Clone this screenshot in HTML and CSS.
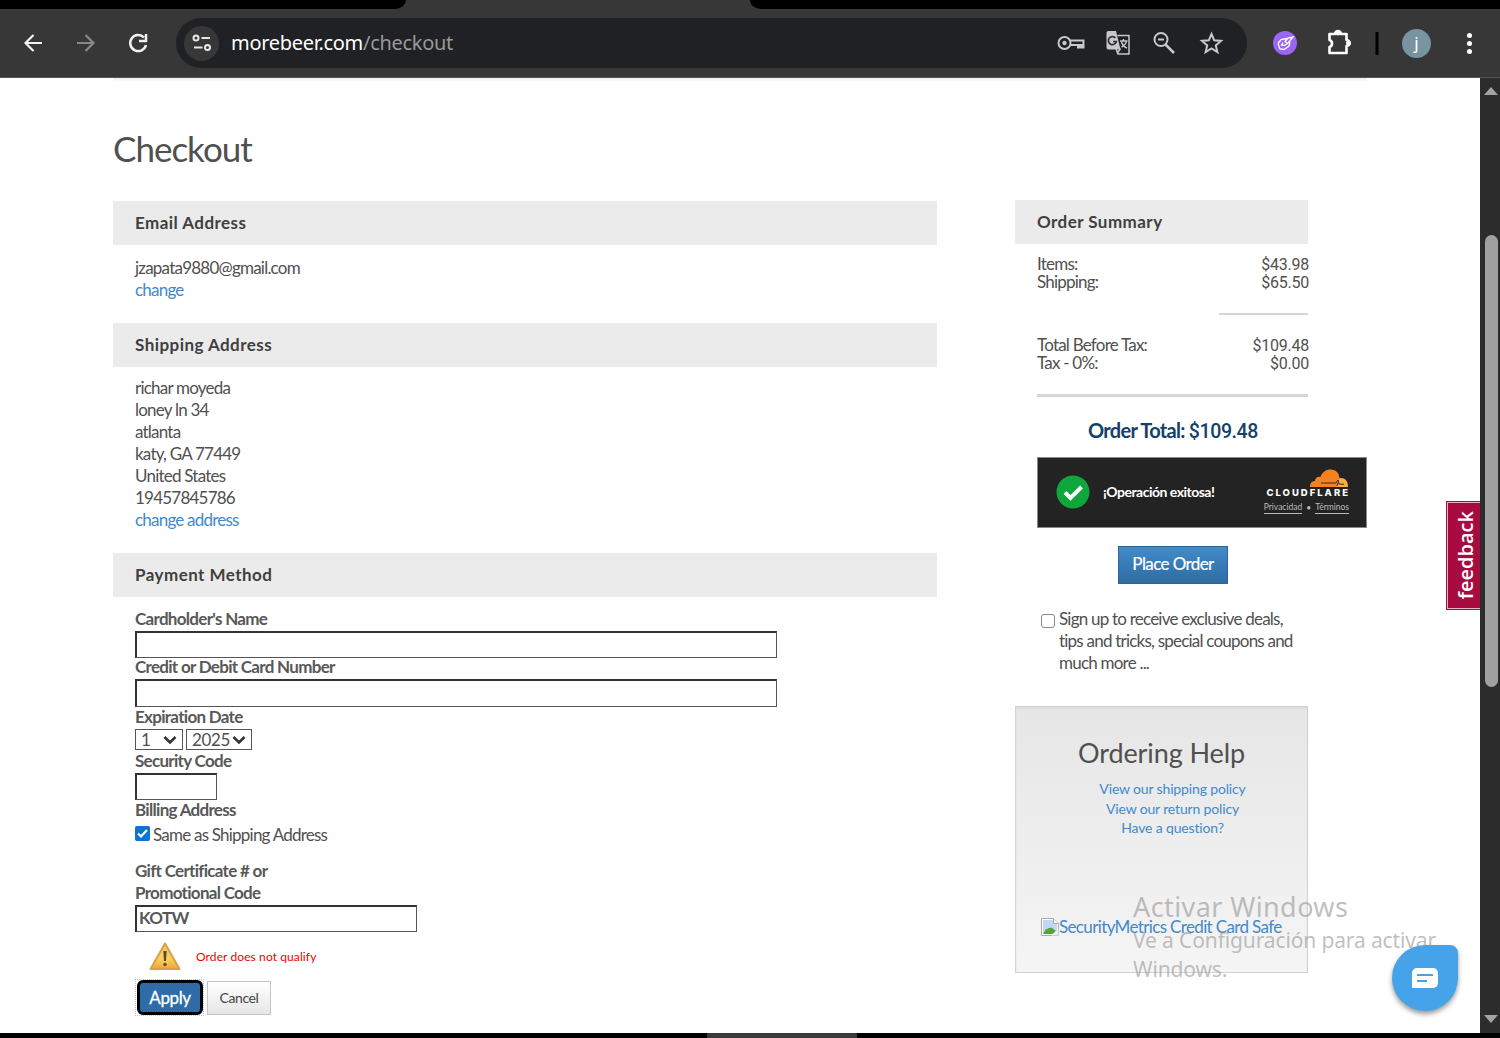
FILE: index.html
```
<!DOCTYPE html>
<html lang="en">
<head>
    <meta charset="UTF-8">
    <meta name="viewport" content="width=device-width, initial-scale=1.0">
    <title>Checkout</title>
    <link rel="stylesheet" href="styles.css">
</head>
<body>

    <!-- Browser bar -->
    <header class="browser">
        <div class="tab-strip">
            <div class="tab-left"></div>
            <div class="tab-right"></div>
        </div>
        <div class="toolbar">
            <svg class="nav-icons" width="150" height="30" viewBox="0 0 150 30" fill="none" stroke="#f2f2f2" stroke-width="2.200">
                <path d="M42 15H26M33.500 7L25.500 15l8 8"/>
                <path d="M77 15h16M85.500 7l8 8-8 8" stroke="#888"/>
                <path d="M144 9.500A8 8 0 1 0 146 17M146 6v7h-7" stroke-width="2.500"/>
            </svg>
            <div class="address-bar">
                <span class="site-info">
                    <svg width="22" height="20" viewBox="0 0 22 20" fill="none" stroke="#e6e6e6" stroke-width="2">
                        <circle cx="5" cy="5" r="2.500"/><path d="M10.500 5H19M3 14.500h8.500"/><circle cx="16.500" cy="14.500" r="2.500"/>
                    </svg>
                </span>
                <span class="url"><b>morebeer.com</b>/checkout</span>
                <svg class="bar-icons" width="170" height="30" viewBox="0 0 170 30" fill="none" stroke="#c8c8c8" stroke-width="2">
                    <circle cx="7.500" cy="15" r="6"/><circle cx="7.500" cy="15" r="2.200" fill="#c8c8c8" stroke="none"/>
                    <path d="M13 12.500H26.500v7H21V17h-8"/><path d="M21 16h5v3.500h-5z" fill="#c8c8c8" stroke="none"/>
                    <path d="M51 3h8l4.500 18.500H51.500a2 2 0 0 1-2-2V5a2 2 0 0 1 1.500-2z" fill="#c8c8c8" stroke="none"/>
                    <path d="M58.500 10a4 4 0 1 0 .8 3.500H56" stroke="#303134" stroke-width="1.700"/>
                    <path d="M60.500 7.500H72V26H61l-2-5M63 13h7.500M66.500 11v2M69.500 13c-.5 3-3 5-5 6M64.500 14c1 3 3 5 5.500 6M63.500 20.500L60 25.500" stroke-width="1.500"/>
                    <circle cx="104" cy="11.500" r="6.500"/><path d="M108.500 16.500L117 25" stroke-width="2.500"/><path d="M101 11.500h6"/>
                    <path d="M153.500 6l2.700 6.300 6.800.6-5.200 4.500 1.600 6.700-5.900-3.600-5.900 3.600 1.600-6.700-5.200-4.500 6.800-.6z" transform="translate(1 0)" stroke-width="2"/>
                </svg>
            </div>
            <svg class="ext-icons" width="110" height="30" viewBox="0 0 110 30" fill="none">
                <circle cx="15" cy="15" r="12" fill="#9b66f5"/>
                <g stroke="#fff" stroke-width="1.300"><path d="M8 15.500l3-4 6-1M20 14l-1 4-5 3.500-4-.5-2-5.500M13 14.500l-1.500 2.500 3 .5 4-3 4.500-5.500-5 1-3 3.500 2 1.500"/></g>
                <path d="M59.500 6H65a3 3 0 0 1 6 0H76.500v6a3 3 0 0 1 0 6V25H59.500v-6a3.700 3.700 0 0 0 0-7V6z" stroke="#fff" stroke-width="2.600" stroke-linejoin="round"/>
                <circle cx="68" cy="5" r="2.500" fill="#fff"/><circle cx="78.500" cy="15" r="2.500" fill="#fff"/>
                <path d="M107 4v23" stroke="#000" stroke-width="3"/>
            </svg>
            <span class="avatar">j</span>
            <div class="menu-dots"><i></i><i></i><i></i></div>
        </div>
    </header>

    <div class="viewport">
        <main class="page">
            <div class="top-rule"></div>
            <div class="columns">
                <div class="main-column">
                    <h1>Checkout</h1>

                    <section>
                        <h2>Email Address</h2>
                        <div class="section-body">
                            <div>jzapata9880@gmail.com</div>
                            <a>change</a>
                        </div>
                    </section>

                    <section>
                        <h2>Shipping Address</h2>
                        <div class="section-body address">
                            <div>richar moyeda</div>
                            <div>loney ln 34</div>
                            <div>atlanta</div>
                            <div>katy, GA 77449</div>
                            <div>United States</div>
                            <div>19457845786</div>
                            <a>change address</a>
                        </div>
                    </section>

                    <section>
                        <h2>Payment Method</h2>
                        <form class="payment">
                            <label for="name">Cardholder's Name</label>
                            <input type="text" id="name" class="wide">
                            <label for="card">Credit or Debit Card Number</label>
                            <input type="text" id="card" class="wide card">
                            <label>Expiration Date</label>
                            <div class="expiry">
                                <div class="select month">1 <svg width="14" height="10" viewBox="0 0 14 10"><path d="M1.500 2L7 7.500 12.500 2" fill="none" stroke="#333" stroke-width="2.600"/></svg></div>
                                <div class="select year">2025 <svg width="14" height="10" viewBox="0 0 14 10"><path d="M1.500 2L7 7.500 12.500 2" fill="none" stroke="#333" stroke-width="2.600"/></svg></div>
                            </div>
                            <label for="cvv">Security Code</label>
                            <input type="text" id="cvv" class="cvv">
                            <label>Billing Address</label>
                            <div class="same">
                                <svg width="15" height="15" viewBox="0 0 15 15"><rect width="15" height="15" rx="2" fill="#0b74d4"/><path d="M3 7.500l3 3 6-6.500" fill="none" stroke="#fff" stroke-width="2.200"/></svg>
                                <span>Same as Shipping Address</span>
                            </div>
                            <label class="gift" for="promo">Gift Certificate # or<br>Promotional Code</label>
                            <input type="text" id="promo" class="promo" value="KOTW">
                            <div class="warning">
                                <svg width="34" height="30" viewBox="0 0 34 30">
                                    <defs><linearGradient id="warn" x1="0" y1="0" x2="0" y2="1"><stop offset="0" stop-color="#f8c64a"/><stop offset=".6" stop-color="#fbd25a"/><stop offset="1" stop-color="#eea33c"/></linearGradient></defs>
                                    <path d="M17 1.500L31.500 27h-29z" fill="url(#warn)" stroke="#d9a04c" stroke-width="2" stroke-linejoin="round"/>
                                    <path d="M15.300 9h3.400l-.7 10h-2z" fill="#54503c"/><circle cx="17" cy="22.500" r="1.700" fill="#54503c"/>
                                </svg>
                                <span>Order does not qualify</span>
                            </div>
                            <div class="buttons">
                                <div class="focus-frame"><button type="button" class="apply-btn">Apply</button></div>
                                <button type="button" class="cancel-btn">Cancel</button>
                            </div>
                        </form>
                    </section>
                </div>

                <aside>
                    <h2>Order Summary</h2>
                    <div class="summary">
                        <div class="row"><span>Items:</span><span class="amount">$43.98</span></div>
                        <div class="row"><span>Shipping:</span><span class="amount">$65.50</span></div>
                        <div class="short-rule"></div>
                        <div class="row"><span>Total Before Tax:</span><span class="amount">$109.48</span></div>
                        <div class="row"><span>Tax - 0%:</span><span class="amount">$0.00</span></div>
                        <div class="long-rule"></div>
                        <div class="total">Order Total: <span>$109.48</span></div>
                    </div>

                    <div class="captcha">
                        <svg width="34" height="34" viewBox="0 0 34 34"><circle cx="17" cy="17" r="16.500" fill="#0fa63c"/><path d="M9 17.500l5.500 5.500L25.500 12" fill="none" stroke="#fff" stroke-width="4"/></svg>
                        <span class="success">¡Operación exitosa!</span>
                        <div class="cloudflare">
                            <svg width="40" height="19" viewBox="0 0 40 19">
                                <path d="M25 18c1-6 3-9 7-9 4 0 7 3 7 9z" fill="#fbad41"/>
                                <path d="M1 18c0-4 2-6 5-6 0-3 3-5 5.500-4C13 3 17 .5 21.500.5 27 .5 30 4 30.500 9l-2 4 1 2-2 3z" fill="#f6821f"/>
                                <path d="M12 14h15l2-3 1 4 5 .3M28 17l1.500-4" fill="none" stroke="#3b2a18" stroke-width="1"/>
                            </svg>
                            <b>CLOUDFLARE</b>
                            <div class="terms"><u>Privacidad</u><span>•</span><u>Términos</u></div>
                        </div>
                    </div>

                    <button type="button" class="order-btn">Place Order</button>

                    <label class="signup">
                        <span class="box"></span>
                        <span>Sign up to receive exclusive deals,<br>tips and tricks, special coupons and<br>much more ...</span>
                    </label>

                    <div class="help">
                        <h3>Ordering Help</h3>
                        <a>View our shipping policy</a>
                        <a>View our return policy</a>
                        <a>Have a question?</a>
                        <div class="badge-alt">
                            <svg width="18" height="18" viewBox="0 0 18 18">
                                <path d="M.5.5h12l5 5v12H.5z" fill="#fff" stroke="#aaa"/>
                                <path d="M2 2h10v4h4v9H2z" fill="#c3d7f5"/>
                                <path d="M2 16c2-5 6-7 9-6l4 3-3 3z" fill="#56a33a"/>
                                <path d="M10 17.500l7.500-7v7z" fill="#eee"/>
                                <path d="M12.500.5v5h5" fill="#fff" stroke="#aaa"/>
                            </svg><span>SecurityMetrics Credit Card Safe</span>
                        </div>
                    </div>
                </aside>
            </div>

            <div class="feedback"><span>feedback</span></div>
            <div class="watermark">
                <div class="wm-title">Activar Windows</div>
                <div>Ve a Configuración para activar<br>Windows.</div>
            </div>
            <div class="chat">
                <svg width="26" height="21" viewBox="0 0 26 21"><path d="M5 0h16a5 5 0 0 1 5 5v10a5 5 0 0 1-5 5H0V5a5 5 0 0 1 5-5z" fill="#fff"/><path d="M5 7h16M5 13h10" stroke="#46a3ea" stroke-width="2"/></svg>
            </div>
        </main>

        <div class="scrollbar">
            <svg width="14" height="8" viewBox="0 0 14 8"><path d="M0 8l7-8 7 8z" fill="#a3a3a3"/></svg>
            <div class="thumb"></div>
            <svg class="down" width="14" height="8" viewBox="0 0 14 8"><path d="M0 0l7 8 7-8z" fill="#a3a3a3"/></svg>
        </div>
    </div>

    <footer class="taskbar"><div class="task"></div></footer>

</body>
</html>
```
FILE: styles.css
```
* {
    box-sizing: border-box;
}

body {
    margin: 0;
    width: 1500px;
    height: 1038px;
    overflow: hidden;
    background: #000;
    color: #505050;
    font-family: Lato, sans-serif;
    font-size: 17px;
    line-height: 22px;
    letter-spacing: -0.78px;
}

/* Browser bar */
.browser {
    height: 78px;
    background: #373737;
}

.tab-strip {
    height: 9px;
    display: flex;
    justify-content: space-between;
}

.tab-left {
    width: 406px;
    background: #000;
    border-bottom-right-radius: 11px 9px;
}

.tab-right {
    width: 750px;
    background: #000;
    border-bottom-left-radius: 11px 9px;
}

.toolbar {
    height: 69px;
    display: flex;
    align-items: center;
    background: #373737;
    border-bottom: 1px solid #555;
}

.nav-icons {
    flex: none;
    margin-right: 26px;
}

.address-bar {
    width: 1071px;
    height: 50px;
    border-radius: 25px;
    background: #202124;
    display: flex;
    align-items: center;
    padding-left: 8px;
}

.site-info {
    width: 35px;
    height: 35px;
    border-radius: 50%;
    background: #373737;
    display: flex;
    align-items: center;
    justify-content: center;
}

.url {
    margin: 0 0 0 12px;
    font-family: "Noto Sans", sans-serif;
    font-size: 20px;
    letter-spacing: -0.3px;
    color: #999;
}

.url b {
    font-weight: 400;
    color: #fff;
}

.bar-icons {
    margin-left: auto;
    margin-right: 20px;
}

.ext-icons {
    flex: none;
    margin-left: 23px;
}

.avatar {
    width: 29px;
    height: 29px;
    border-radius: 50%;
    background: #7794a0;
    color: #fff;
    font-family: "Noto Sans", sans-serif;
    font-size: 17px;
    line-height: 27px;
    letter-spacing: 0;
    text-align: center;
    margin-left: 22px;
}

.menu-dots {
    margin-left: 36px;
    display: flex;
    flex-direction: column;
    gap: 3px;
}

.menu-dots i {
    width: 5px;
    height: 5px;
    border-radius: 50%;
    background: #fff;
}

/* Page */
.viewport {
    height: 955px;
    display: flex;
}

.page {
    position: relative;
    width: 1480px;
    background: #fff;
    padding-left: 113px;
}

.top-rule {
    width: 1254px;
    height: 4px;
    background: linear-gradient(#eee, #fff);
}

.columns {
    display: flex;
    gap: 78px;
}

.main-column {
    width: 824px;
}

h1 {
    margin: 45px 0 32px;
    font-size: 35px;
    line-height: 42px;
    font-weight: 400;
    letter-spacing: -1px;
}

h2 {
    margin: 0;
    height: 44px;
    padding-left: 22px;
    background: #ebebeb;
    color: #404040;
    font-size: 17px;
    line-height: 44px;
    font-weight: 700;
    letter-spacing: 0.45px;
}

a {
    display: block;
    color: #4289cb;
}

.section-body {
    padding: 12px 22px 22px;
}

.address {
    padding: 10px 22px 22px;
}

.payment {
    padding: 11px 22px 0;
}

.payment label {
    display: block;
    color: #585858;
    font-weight: 700;
    letter-spacing: -0.7px;
}

.payment input {
    display: block;
    height: 27px;
    margin: 1px 0 0;
    padding: 0 3px 4px 2px;
    border: 1px solid #555;
    border-top: 2px solid #333;
    border-left: 2px solid #333;
    color: #585858;
    font: 700 17px Lato, sans-serif;
    letter-spacing: -0.7px;
}

.payment .wide {
    width: 642px;
    margin-bottom: -2px;
}

.payment .card {
    height: 28px;
    margin-bottom: -1px;
}

.expiry {
    display: flex;
    gap: 3px;
    margin-top: 1px;
}

.select {
    height: 21px;
    border: 1px solid #555;
    display: flex;
    align-items: center;
    justify-content: space-between;
    padding: 0 5px;
    letter-spacing: -0.4px;
}

.month {
    width: 48px;
}

.year {
    width: 66px;
}

.payment .cvv {
    width: 82px;
    margin-bottom: -1px;
}

.same {
    display: flex;
    gap: 3px;
    margin-top: 3px;
}

.same svg {
    margin-top: 2px;
}

.payment .gift {
    margin-top: 14px;
}

.payment .promo {
    width: 282px;
}

.warning {
    height: 47px;
    display: flex;
    align-items: center;
    gap: 14px;
    padding: 2px 0 0 13px;
    color: #e00;
    font-size: 12px;
    letter-spacing: 0.1px;
}

.buttons {
    display: flex;
    align-items: center;
    gap: 3px;
}

button {
    padding: 0;
    font-family: Lato, sans-serif;
    letter-spacing: -0.4px;
}

.focus-frame {
    width: 69px;
    height: 37px;
    padding: 1px 1px 1px 2px;
    border: 1px dotted #b5c9dc;
}

.apply-btn {
    display: block;
    width: 66px;
    height: 35px;
    margin: -1px 0 0 -1px;
    border: 3px solid #000;
    border-radius: 6px;
    background: #2e6ca8;
    color: #fff;
    font-size: 17px;
    -webkit-text-stroke: 0.3px #fff;
}

.cancel-btn {
    width: 64px;
    height: 34px;
    border: 1px solid #c4c4c4;
    background: linear-gradient(#fff, #e6e6e6);
    color: #444;
    font-size: 14px;
}

/* Right column */
aside {
    width: 352px;
    padding-top: 118px;
}

aside h2 {
    width: 293px;
}

.summary {
    width: 294px;
    padding: 12px 0 0 22px;
}

.row {
    display: flex;
    justify-content: space-between;
    height: 18px;
    line-height: 16px;
}

.amount {
    font-family: Roboto, sans-serif;
    font-size: 16px;
    line-height: 18px;
    letter-spacing: -0.25px;
}

.short-rule {
    width: 89px;
    height: 2px;
    margin: 21px 1px 22px auto;
    background: #d6d6d6;
}

.long-rule {
    height: 3px;
    margin: 21px 1px 21px 0;
    background: #d6d6d6;
}

.total {
    color: #13416b;
    font-size: 20px;
    line-height: 24px;
    font-weight: 700;
    letter-spacing: -0.7px;
    text-align: center;
}

.total span {
    font-family: Roboto, sans-serif;
    font-weight: 500;
    font-size: 19.500px;
    letter-spacing: -0.4px;
}

.captcha {
    width: 330px;
    height: 71px;
    margin: 13px 0 18px 22px;
    padding: 0 17px 2px 18px;
    border: 1px solid #888;
    background: #232323;
    color: #fff;
    display: flex;
    align-items: center;
}

.success {
    margin-left: 13px;
    font-size: 14px;
    font-weight: 700;
    letter-spacing: -0.5px;
}

.cloudflare {
    margin-left: auto;
    display: flex;
    flex-direction: column;
    align-items: flex-end;
}

.cloudflare b {
    font-family: Inter, sans-serif;
    font-size: 9.500px;
    font-weight: 800;
    line-height: 10px;
    letter-spacing: 2px;
    margin-right: -1px;
}

.terms {
    display: flex;
    gap: 4px;
    margin-top: 5px;
    color: #bbb;
    font-size: 8.500px;
    line-height: 11px;
    letter-spacing: 0;
}

.terms u {
    text-decoration: none;
    border-bottom: 1px solid #bbb;
    height: 11px;
    line-height: 9px;
}

.order-btn {
    display: block;
    width: 110px;
    height: 38px;
    margin-left: 103px;
    padding-bottom: 3px;
    border: 1px solid #2b669a;
    background: linear-gradient(#428bca, #2d6ca2);
    color: #fff;
    font-size: 17px;
    letter-spacing: -0.6px;
    -webkit-text-stroke: 0.2px #fff;
}

.signup {
    display: flex;
    gap: 4px;
    margin: 24px 0 0 26px;
}

.box {
    width: 14px;
    height: 14px;
    margin-top: 6px;
    border: 1px solid #888;
    border-radius: 3px;
}

.help {
    width: 293px;
    height: 267px;
    margin-top: 32px;
    padding: 29px 0 0 22px;
    border: 1px solid #d3d3d3;
    background: linear-gradient(#e6e6e6, #f5f5f5);
    box-shadow: inset 0 2px 2px #dcdcdc;
    text-align: center;
}

.help h3 {
    margin: 0 0 9px -22px;
    font-size: 27px;
    line-height: 34px;
    font-weight: 400;
    letter-spacing: -0.1px;
}

.help a {
    font-size: 14px;
    line-height: 19.700px;
    letter-spacing: -0.15px;
}

.badge-alt {
    display: flex;
    align-items: center;
    margin: 78px 0 0 3px;
    color: #4289cb;
    letter-spacing: -0.64px;
    white-space: nowrap;
}

/* Overlays */
.feedback {
    position: absolute;
    right: 0;
    top: 423px;
    width: 34px;
    height: 109px;
    border: 1px solid #a70b40;
    border-right: 0;
    background: #a70b40;
    box-shadow: inset 1px 1px 0 #e9b3c5, inset 0 -1px 0 #e9b3c5;
    color: #fff;
    display: flex;
    align-items: center;
    justify-content: center;
    padding-left: 4px;
}

.feedback span {
    writing-mode: vertical-rl;
    transform: rotate(180deg);
    font-family: "Open Sans", sans-serif;
    font-size: 20px;
    font-weight: 600;
    letter-spacing: 0;
}

.chat {
    position: absolute;
    left: 1392px;
    top: 867px;
    width: 66px;
    height: 66px;
    border-radius: 50% 8px 50% 50%;
    background: #46a3ea;
    box-shadow: 0 3px 5px rgba(0, 0, 0, 0.4);
    display: flex;
    align-items: center;
    justify-content: center;
}

.watermark {
    position: absolute;
    left: 1133px;
    top: 811px;
    color: rgba(150, 150, 150, 0.6);
    font-family: "Noto Sans", sans-serif;
    font-size: 21px;
    line-height: 29px;
    letter-spacing: -0.13px;
    white-space: nowrap;
}

.wm-title {
    margin-bottom: 1px;
    font-size: 27px;
    line-height: 36px;
    letter-spacing: 0.4px;
}

.scrollbar {
    width: 20px;
    background: #2c2c2c;
    display: flex;
    flex-direction: column;
    align-items: center;
    padding: 9px 0 10px 2px;
}

.thumb {
    width: 13px;
    height: 452px;
    margin-top: 140px;
    border-radius: 7px;
    background: #a0a0a0;
}

.down {
    margin-top: auto;
}

.taskbar {
    height: 5px;
    padding-left: 707px;
    background: #000;
}

.task {
    width: 150px;
    height: 5px;
    background: #3a3a3a;
}
```
